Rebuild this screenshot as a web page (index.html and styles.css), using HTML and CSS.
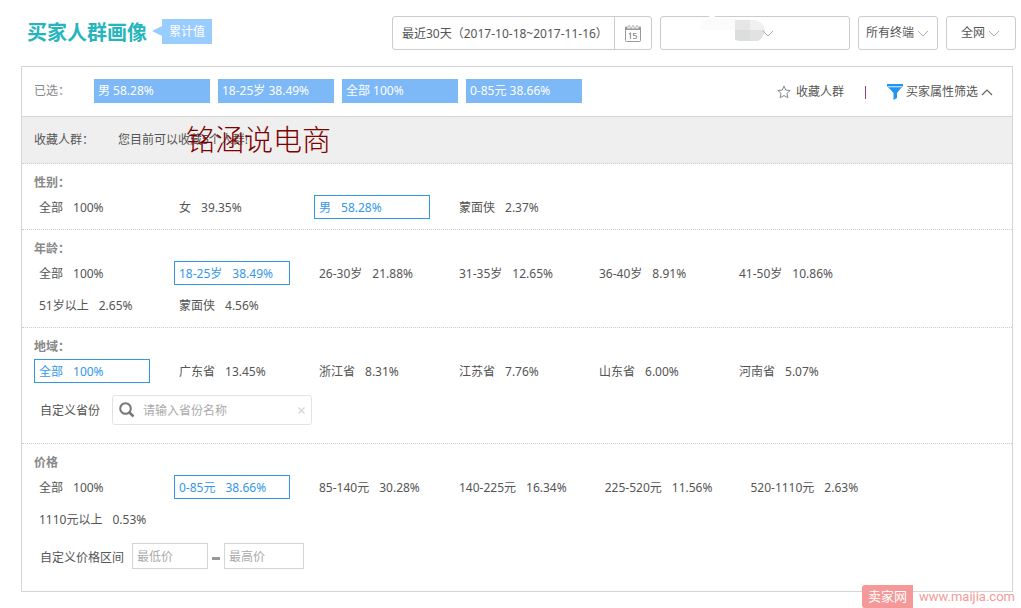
FILE: index.html
```html
<!DOCTYPE html>
<html lang="zh-CN">
<head>
<meta charset="utf-8">
<meta name="viewport" content="width=device-width, initial-scale=1">
<title>买家人群画像</title>
<link rel="stylesheet" href="styles.css">
</head>
<body>
<div class="page">
  <header class="topbar">
    <h1 class="title">买家人群画像</h1>
    <span class="tag">累计值</span>
    <div class="filters">
      <div class="date-box">
        <input class="date-input" type="text" readonly aria-label="日期范围" value="最近30天（2017-10-18~2017-11-16）">
        <button class="date-button" type="button" aria-label="选择日期">
          <svg width="16" height="17" viewBox="0 0 16 17"><path d="M.5 4V15.5Q.5 16.5 1.500 16.500H14.500Q15.500 16.500 15.500 15.500V4" fill="none" stroke="#999"/><path d="M0 5V2.500Q0 1.500 1 1.500H2.500V3.500H5.500V1.500H6.500V3.500H9.500V1.500H10.500V3.500H13.500V1.500H15Q16 1.500 16 2.500V5Z" fill="#999"/><path d="M4 0V2.500M8 0V2.500M12 0V2.500" stroke="#999"/><path d="M4 9L5.500 8V14M11.500 8.500H8.500V10.500H10Q11.800 10.500 11.800 12T10 13.500H8" fill="none" stroke="#999" stroke-width="1.200"/></svg>
        </button>
      </div>
      <div class="select-box select-category">
        <select aria-label="类目"><option></option></select>
        <svg class="smudge" width="70" height="27" viewBox="0 0 70 27"><path d="M0 14Q0 4 9 3V0H15V3H50V14Z" fill="#fbfbfb"/><path d="M35 4H50V14H35Z" fill="#e6e6e6"/><path d="M50 4H55Q63 6 65 14H50Z" fill="#f0f0f0"/><path d="M35 14H50V25H40L35 24Z" fill="#dcdddd"/><path d="M50 14H65Q64 22 58 25H50Z" fill="#e2e2e4"/></svg>
        <svg class="chevron" width="12" height="7" viewBox="0 0 12 7"><path d="M1 1L6 6L11 1"/></svg>
      </div>
      <div class="select-box select-terminal">
        <select aria-label="终端"><option>所有终端</option></select>
        <svg class="chevron" width="12" height="7" viewBox="0 0 12 7"><path d="M1 1L6 6L11 1"/></svg>
      </div>
      <div class="select-box select-scope">
        <select aria-label="范围"><option>全网</option></select>
        <svg class="chevron" width="12" height="7" viewBox="0 0 12 7"><path d="M1 1L6 6L11 1"/></svg>
      </div>
    </div>
  </header>

  <main class="panel">
    <div class="selected-row">
      <span class="selected-label">已选：</span>
      <div class="chips">
        <button class="chip" type="button">男 58.28%</button>
        <button class="chip" type="button">18-25岁 38.49%</button>
        <button class="chip" type="button">全部 100%</button>
        <button class="chip" type="button">0-85元 38.66%</button>
      </div>
      <div class="actions">
        <button class="action" type="button">
          <svg width="14" height="14" viewBox="0 0 14 14"><path d="M7 1L8.800 5.100L13.200 5.500L9.900 8.400L10.900 12.800L7 10.500L3.100 12.800L4.100 8.400L.8 5.500L5.200 5.100Z" fill="none" stroke="#888" stroke-linejoin="round"/></svg>
          收藏人群
        </button>
        <span class="divider"></span>
        <button class="action filter-toggle" type="button" aria-expanded="true">
          <svg width="16" height="16" viewBox="0 0 16 16"><path d="M0 0H16V2L14.800 3.500H1.200L0 2Z" fill="#2594ec"/><path d="M1.500 3.500H14.500L10 9V14L6.500 16V9Z" fill="#2594ec"/><path d="M1 2.500H15" stroke="#a9d6fb"/></svg>
          买家属性筛选
          <svg class="chevron-up" width="12" height="7" viewBox="0 0 12 7"><path d="M1 6L6 1L11 6"/></svg>
        </button>
      </div>
    </div>

    <div class="saved-row">
      <span class="saved-label">收藏人群：</span>
      <span class="saved-hint">您目前可以收藏5个人群!<span class="stamp">铭涵说电商</span></span>
    </div>

    <section class="group">
      <h2>性别：</h2>
      <div class="options">
        <button class="option" type="button"><span>全部</span><span>100%</span></button>
        <button class="option" type="button"><span>女</span><span>39.35%</span></button>
        <button class="option active" type="button"><span>男</span><span>58.28%</span></button>
        <button class="option" type="button"><span>蒙面侠</span><span>2.37%</span></button>
      </div>
    </section>

    <section class="group">
      <h2>年龄：</h2>
      <div class="options">
        <button class="option" type="button"><span>全部</span><span>100%</span></button>
        <button class="option active" type="button"><span>18-25岁</span><span>38.49%</span></button>
        <button class="option" type="button"><span>26-30岁</span><span>21.88%</span></button>
        <button class="option" type="button"><span>31-35岁</span><span>12.65%</span></button>
        <button class="option" type="button"><span>36-40岁</span><span>8.91%</span></button>
        <button class="option" type="button"><span>41-50岁</span><span>10.86%</span></button>
        <button class="option" type="button"><span>51岁以上</span><span>2.65%</span></button>
        <button class="option" type="button"><span>蒙面侠</span><span>4.56%</span></button>
      </div>
    </section>

    <section class="group group-region">
      <h2>地域：</h2>
      <div class="options">
        <button class="option active" type="button"><span>全部</span><span>100%</span></button>
        <button class="option" type="button"><span>广东省</span><span>13.45%</span></button>
        <button class="option" type="button"><span>浙江省</span><span>8.31%</span></button>
        <button class="option" type="button"><span>江苏省</span><span>7.76%</span></button>
        <button class="option" type="button"><span>山东省</span><span>6.00%</span></button>
        <button class="option" type="button"><span>河南省</span><span>5.07%</span></button>
      </div>
      <div class="custom custom-region">
        <label for="province">自定义省份</label>
        <div class="search">
          <svg width="16" height="16" viewBox="0 0 16 16"><circle cx="6.500" cy="6.500" r="5.300" fill="none" stroke="#777" stroke-width="2"/><path d="M10.500 10.500L14.500 14.500" stroke="#777" stroke-width="2.500"/></svg>
          <input id="province" type="text" placeholder="请输入省份名称">
          <button class="clear" type="button" aria-label="清除"><svg width="7" height="7" viewBox="0 0 7 7"><path d="M.5 .5L6.500 6.500M6.500 .5L.5 6.500" stroke="#d4d4d4" stroke-width="1.200"/></svg></button>
        </div>
      </div>
    </section>

    <section class="group group-price">
      <h2>价格</h2>
      <div class="options">
        <button class="option" type="button"><span>全部</span><span>100%</span></button>
        <button class="option active" type="button"><span>0-85元</span><span>38.66%</span></button>
        <button class="option" type="button"><span>85-140元</span><span>30.28%</span></button>
        <button class="option" type="button"><span>140-225元</span><span>16.34%</span></button>
        <button class="option" type="button"><span>225-520元</span><span>11.56%</span></button>
        <button class="option" type="button"><span>520-1110元</span><span>2.63%</span></button>
        <button class="option" type="button"><span>1110元以上</span><span>0.53%</span></button>
      </div>
      <div class="custom custom-price">
        <label for="price-min">自定义价格区间</label>
        <div class="range">
          <input class="price-min" id="price-min" type="text" placeholder="最低价">
          <span class="dash"></span>
          <input class="price-max" type="text" placeholder="最高价" aria-label="最高价">
        </div>
      </div>
    </section>
  </main>

  <div class="brand"><span class="brand-logo">卖家网</span><span class="brand-url">www.maijia.com</span></div>
</div>
</body>
</html>
```

FILE: styles.css
```css
* {
  box-sizing: border-box;
}

body {
  margin: 0;
  background: #fff;
  color: #555;
}

body,
button,
input,
select {
  font-family: "Noto Sans", "Noto Sans CJK SC", sans-serif;
  font-size: 12px;
  line-height: 20px;
}

button {
  margin: 0;
  padding: 0;
  border: 0;
  background: none;
  color: inherit;
  white-space: nowrap;
}

input,
select {
  margin: 0;
  border: 0;
  background: none;
  color: #555;
  min-width: 0;
}

svg {
  display: block;
  flex: none;
}

.page {
  position: relative;
  padding: 16px 5px 16px 21px;
}

.topbar {
  display: flex;
  align-items: center;
  padding-left: 6px;
}

.title {
  margin: 0;
  font-size: 20px;
  line-height: 30px;
  color: #26b5bd;
  white-space: nowrap;
}

.tag {
  position: relative;
  margin: -3px 0 0 15px;
  padding: 0 7px;
  background: #9cf;
  color: #fff;
  line-height: 25px;
  white-space: nowrap;
}

.tag::before {
  content: "";
  position: absolute;
  left: -10px;
  top: 7px;
  border: 5px solid transparent;
  border-left-width: 0;
  border-right: 10px solid #9cf;
}

.filters {
  display: flex;
  gap: 8px;
  margin-left: auto;
}

.date-box,
.select-box {
  display: flex;
  align-items: center;
  height: 34px;
  border: 1px solid #ccc;
  border-radius: 3px;
}

.date-input {
  width: 221px;
  height: 100%;
  padding: 0 0 0 9px;
}

.date-button {
  display: flex;
  align-items: center;
  justify-content: center;
  width: 37px;
  height: 100%;
  border-left: 1px solid #ccc;
}

.select-box {
  position: relative;
  justify-content: center;
}

.select-box select {
  appearance: none;
  width: 100%;
  height: 100%;
  padding: 0;
}

.select-box .chevron {
  position: absolute;
  right: 8px;
  top: 13px;
  pointer-events: none;
}

.chevron path {
  fill: none;
  stroke: #aaa;
}

.select-category {
  width: 190px;
}

.select-category .chevron {
  right: 75px;
}

.smudge {
  position: absolute;
  left: 39px;
  top: -1px;
  pointer-events: none;
}

.select-terminal {
  width: 80px;
}

.select-box.select-terminal select {
  padding-left: 7px;
}

.select-scope {
  width: 70px;
}

.select-box.select-scope select {
  padding-left: 14px;
}

.select-scope .chevron {
  right: 15px;
}

.panel {
  margin: 16px 3px 0 0;
  border: 1px solid #d5d5d5;
}

.selected-row {
  display: flex;
  align-items: center;
  padding: 12px 19px 13px 12px;
  border-bottom: 1px solid #d5d5d5;
}

.selected-label {
  width: 60px;
  color: #888;
}

.chips {
  display: flex;
  gap: 8px;
}

.chip {
  min-width: 116px;
  height: 24px;
  padding: 0 4px;
  background: #7db8f7;
  color: #fff;
  text-align: left;
}

.actions {
  display: flex;
  align-items: center;
  margin-left: auto;
  padding-top: 2px;
}

.action {
  display: flex;
  align-items: center;
  gap: 5px;
}

.filter-toggle {
  gap: 3px;
}

.divider {
  width: 1px;
  height: 13px;
  margin: 0 21px;
  background: #93408f;
}

.chevron-up path {
  fill: none;
  stroke: #666;
  stroke-width: 1.2;
}

.saved-row {
  display: flex;
  padding: 13px 12px;
  background: #efefef;
  border-bottom: 1px dotted #ccc;
}

.saved-label {
  width: 84px;
}

.saved-hint {
  position: relative;
}

.stamp {
  position: absolute;
  left: 68px;
  top: -12px;
  color: #7f0000;
  font-family: "Noto Sans CJK SC", sans-serif;
  font-size: 29px;
  font-weight: 300;
  line-height: 40px;
  white-space: nowrap;
}

.group {
  padding: 9px 60px 10px 12px;
  border-bottom: 1px dotted #ccc;
}

.group h2 {
  margin: 0 0 2px;
  color: #888;
  font-size: 12px;
  line-height: 20px;
}

.options {
  display: flex;
  flex-wrap: wrap;
  gap: 8px 24px;
}

.option {
  display: flex;
  align-items: center;
  gap: 10px;
  min-width: 116px;
  height: 24px;
  padding: 2px 8px 0 4px;
  border: 1px solid transparent;
}

.option.active {
  border-color: #3498e0;
  color: #3498e8;
}

.custom {
  display: flex;
  align-items: center;
  margin-top: 12px;
  padding-left: 6px;
}

.custom label {
  padding-top: 2px;
}

.group-region {
  padding-bottom: 18px;
}

.custom-region {
  gap: 12px;
}

.search {
  display: flex;
  align-items: center;
  width: 200px;
  height: 30px;
  padding: 0 6px;
  border: 1px solid #e2e2e2;
  border-radius: 3px;
}

.search input {
  flex: 1;
  height: 100%;
  padding: 0 8px;
}

.custom input::placeholder {
  color: #aaa;
}

.group-price {
  padding-bottom: 22px;
  border-bottom: 0;
}

.custom-price {
  gap: 8px;
}

.custom-price label {
  padding-top: 4px;
}

.range {
  display: flex;
  align-items: center;
  gap: 4px;
}

.price-min,
.price-max {
  width: 76px;
  height: 26px;
  padding: 0 4px;
  border: 1px solid #d5d5d5;
}

.price-max {
  width: 80px;
}

.dash {
  width: 8px;
  height: 3px;
  margin-top: 4px;
  background: #999;
}

.brand {
  position: absolute;
  right: 6px;
  bottom: 0;
  display: flex;
  align-items: center;
  gap: 6px;
  color: #f59a9a;
}

.brand-logo {
  padding: 0 6px;
  border-radius: 3px 0 0 3px;
  background: #f59898;
  color: #fff;
  font-size: 13px;
  line-height: 23px;
}

.brand-url {
  font-family: Roboto, sans-serif;
  font-size: 13px;
}
```
